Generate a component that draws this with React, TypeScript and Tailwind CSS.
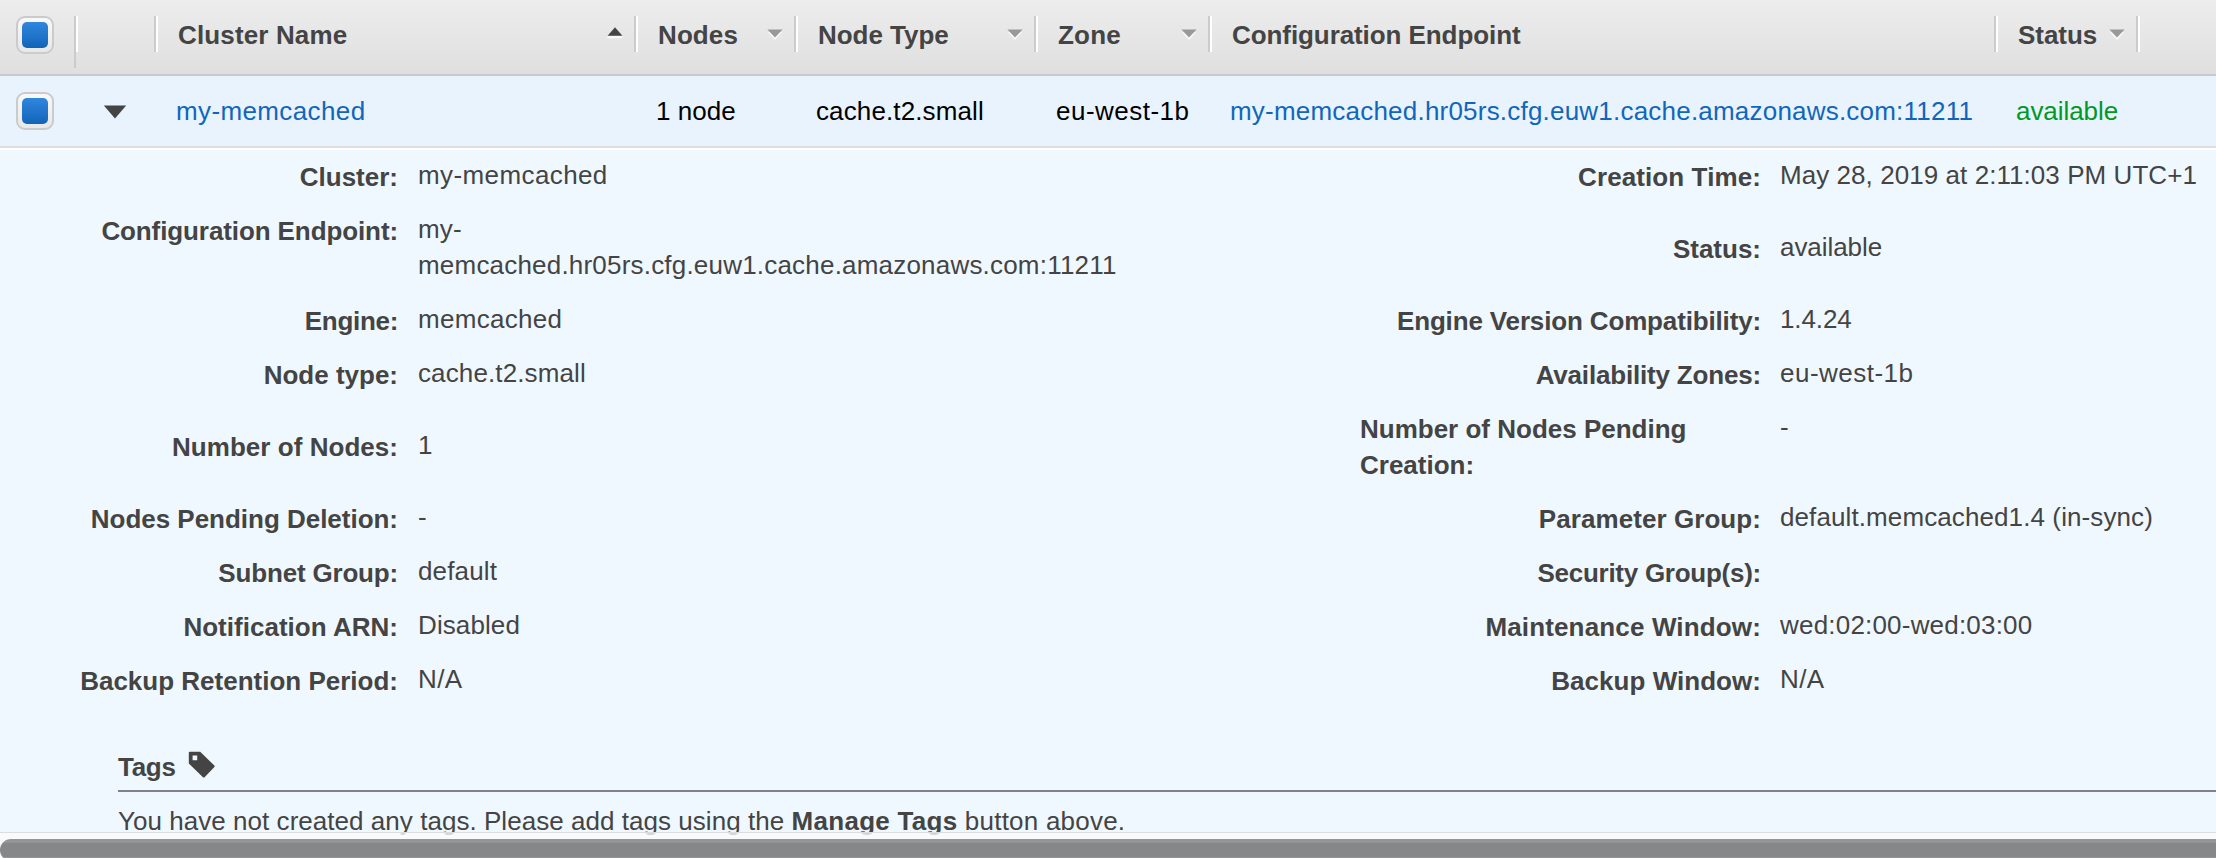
import type { ReactNode } from 'react';

function Checkbox() {
  return (
    <span className="flex size-[38px] items-center justify-center rounded-[9px] border-2 border-[#cbcbcb] bg-linear-to-b from-[#f9f9f9] to-[#e8e8e8]">
      <span className="size-[26px] rounded-[5px] bg-linear-to-b from-[#3087de] to-[#1064b8]" />
    </span>
  );
}

function SortArrow({ dir }: { dir: 'up' | 'down' }) {
  return dir === 'up' ? (
    <svg className="mt-[11px] h-[12px] w-4" viewBox="0 0 16 12">
      <path d="M0.5 10.2h15" stroke="#fafafa" strokeWidth="2" />
      <path d="M8 0.3L15.4 8.8H0.6Z" fill="#444" />
    </svg>
  ) : (
    <svg className="mt-[13px] h-[12px] w-4" viewBox="0 0 16 12">
      <path d="M8 11L1 3H15Z" fill="#fafafa" />
      <path d="M8 8.6L0.4 0.4H15.6Z" fill="#999" />
    </svg>
  );
}

function Separator({ tall = false }: { tall?: boolean }) {
  return (
    <span className="flex shrink-0">
      <span className={tall ? 'h-[52px] w-0.5 bg-[#cbcbcb]' : 'h-9 w-0.5 bg-[#cbcbcb]'} />
      <span className="h-9 w-0.5 bg-white" />
    </span>
  );
}

function HeaderCell({ className, sort, children }: { className: string; sort?: 'up' | 'down'; children?: ReactNode }) {
  return (
    <div className={`flex shrink-0 items-start pt-4 ${className}`}>
      <Separator />
      <span className="mt-px ml-5 whitespace-nowrap">{children}</span>
      {sort && (
        <span className="mr-[11px] ml-auto">
          <SortArrow dir={sort} />
        </span>
      )}
    </div>
  );
}

type Field = { label: string; lt?: string; value: string; vt?: string };

const rows: { left: Field; right: Field; tall?: boolean; top?: boolean }[] = [
  {
    left: { label: 'Cluster:', value: 'my-memcached', vt: 'tracking-[0.4px]' },
    right: { label: 'Creation Time:', lt: 'tracking-[0.1px]', value: 'May 28, 2019 at 2:11:03 PM UTC+1', vt: 'tracking-[0.06px]' },
  },
  {
    tall: true,
    left: {
      label: 'Configuration Endpoint:',
      lt: 'tracking-[-0.1px]',
      value: 'my-memcached.hr05rs.cfg.euw1.cache.amazonaws.com:11211',
      vt: 'tracking-[0.2px]',
    },
    right: { label: 'Status:', value: 'available', vt: 'tracking-[-0.06px]' },
  },
  {
    left: { label: 'Engine:', lt: 'tracking-[-0.3px]', value: 'memcached', vt: 'tracking-[0.3px]' },
    right: { label: 'Engine Version Compatibility:', lt: 'tracking-[-0.15px]', value: '1.4.24', vt: 'tracking-[-0.1px]' },
  },
  {
    left: { label: 'Node type:', value: 'cache.t2.small', vt: 'tracking-[0.12px]' },
    right: { label: 'Availability Zones:', lt: 'tracking-[-0.18px]', value: 'eu-west-1b', vt: 'tracking-[0.48px]' },
  },
  {
    tall: true,
    left: { label: 'Number of Nodes:', lt: 'tracking-[0.04px]', value: '1' },
    right: { label: 'Number of Nodes Pending Creation:', value: '-' },
    top: true,
  },
  {
    left: { label: 'Nodes Pending Deletion:', lt: 'tracking-[-0.02px]', value: '-' },
    right: { label: 'Parameter Group:', lt: 'tracking-[0.07px]', value: 'default.memcached1.4 (in-sync)', vt: 'tracking-[0.1px]' },
  },
  {
    left: { label: 'Subnet Group:', lt: 'tracking-[-0.18px]', value: 'default', vt: 'tracking-[0.15px]' },
    right: { label: 'Security Group(s):', lt: 'tracking-[-0.26px]', value: '' },
  },
  {
    left: { label: 'Notification ARN:', lt: 'tracking-[0.02px]', value: 'Disabled', vt: 'tracking-[0.1px]' },
    right: { label: 'Maintenance Window:', lt: 'tracking-[0.15px]', value: 'wed:02:00-wed:03:00', vt: 'tracking-[0.2px]' },
  },
  {
    left: { label: 'Backup Retention Period:', value: 'N/A', vt: 'tracking-[0.4px]' },
    right: { label: 'Backup Window:', lt: 'tracking-[0.04px]', value: 'N/A', vt: 'tracking-[0.4px]' },
  },
];

function TagIcon() {
  return (
    <svg className="mt-0.5 ml-3 h-7 w-7" viewBox="0 0 28 28">
      <path
        fillRule="evenodd"
        fill="#444"
        d="M1.8 0.8H12.2L26.4 14.6Q27 15.3 26.4 16L16.6 26.2Q15.8 27 15 26.2L0.8 12.6V1.8Q0.8 0.8 1.8 0.8ZM4.6 4.6V9.2H9.2V4.6Z"
      />
    </svg>
  );
}

export default function App() {
  return (
    <div className="flex h-[858px] w-[2216px] flex-col overflow-hidden bg-[#f0f8ff] font-['Liberation_Sans',Arial,sans-serif] text-[26px] leading-9 text-[#444]">
      <div className="flex h-[76px] shrink-0 border-b-2 border-[#c9c9c9] bg-linear-to-b from-[#ededed] to-[#dfdfdf] font-bold">
        <div className="w-[74px] shrink-0 pt-4 pl-4">
          <Checkbox />
        </div>
        <div className="w-20 shrink-0 pt-4">
          <Separator tall />
        </div>
        <HeaderCell className="w-[480px] tracking-[0.14px]" sort="up">Cluster Name</HeaderCell>
        <HeaderCell className="w-40 tracking-[0.1px]" sort="down">Nodes</HeaderCell>
        <HeaderCell className="w-60 tracking-[-0.03px]" sort="down">Node Type</HeaderCell>
        <HeaderCell className="w-[174px] tracking-[0.2px]" sort="down">Zone</HeaderCell>
        <HeaderCell className="w-[786px] tracking-[-0.08px]">Configuration Endpoint</HeaderCell>
        <HeaderCell className="w-[142px] tracking-[-0.04px]" sort="down">Status</HeaderCell>
        <HeaderCell className="w-20" />
      </div>

      <div className="flex h-[72px] shrink-0 border-b-2 border-[#dedede] bg-[#e8f3fe] pt-4 whitespace-nowrap text-black">
        <div className="w-[74px] shrink-0 pl-4">
          <Checkbox />
        </div>
        <div className="w-[102px] shrink-0 pt-[13px] pl-[29px]">
          <svg className="h-[14px] w-6" viewBox="0 0 24 14">
            <path d="M0.8 0.6H23.2L12 13.4Z" fill="#444" />
          </svg>
        </div>
        <span className="mt-px w-[480px] shrink-0 tracking-[0.38px] text-[#1166bb]">my-memcached</span>
        <span className="mt-px w-40 shrink-0 tracking-[0.05px]">1 node</span>
        <span className="mt-px w-60 shrink-0 tracking-[0.12px]">cache.t2.small</span>
        <span className="mt-px w-[174px] shrink-0 tracking-[0.48px]">eu-west-1b</span>
        <span className="mt-px w-[786px] shrink-0 tracking-[0.21px] text-[#1166bb]">
          my-memcached.hr05rs.cfg.euw1.cache.amazonaws.com:11211
        </span>
        <span className="mt-px tracking-[-0.06px] text-[#009926]">available</span>
      </div>

      <div className="flex min-h-0 flex-1 flex-col border-t-2 border-white">
        {rows.map((r, i) => (
          <div key={i} className={r.tall ? 'flex h-[90px] shrink-0 py-[9px]' : 'flex h-[54px] shrink-0 py-[9px]'}>
            <div className={`flex w-[398px] justify-end font-bold whitespace-nowrap ${r.left.lt ?? ''} ${r.top ? 'items-center' : 'items-start'}`}>
              {r.left.label}
            </div>
            <div className={`-mt-0.5 mb-0.5 ml-5 flex w-[710px] ${r.left.vt ?? ''} ${r.top ? 'items-center' : 'items-start'}`}>
              {r.left.value}
            </div>
            <div className={`ml-[232px] flex w-[401px] items-center justify-end font-bold ${r.right.lt ?? ''}`}>
              <span>{r.right.label}</span>
            </div>
            <div className={`-mt-0.5 mb-0.5 ml-[19px] flex whitespace-nowrap ${r.right.vt ?? ''} ${r.top ? 'items-start' : 'items-center'}`}>
              {r.right.value}
            </div>
          </div>
        ))}

        <div className="mt-[41px] ml-[118px] flex h-[43px] shrink-0 border-b-2 border-[#818187]">
          <h2 className="font-bold tracking-[-0.3px]">Tags</h2>
          <TagIcon />
        </div>
        <p className="mt-[11px] ml-[118px] h-9 shrink-0 tracking-[0.04px] whitespace-nowrap">
          You have not created any tags. Please add tags using the{' '}
          <b className="tracking-[0.3px]">Manage Tags</b> <span className="tracking-[0.22px]">button above.</span>
        </p>
      </div>

      <div className="relative -mt-[26px] h-[26px] shrink-0 overflow-hidden border-t border-[#dadcde] bg-[#fafafa]/80 pt-1.5">
        <div className="h-[22px] rounded-l-[11px] bg-[linear-gradient(to_bottom,#939597_4px,#858789_4px,#858789_18px,#939597_18px)]" />
      </div>
    </div>
  );
}
